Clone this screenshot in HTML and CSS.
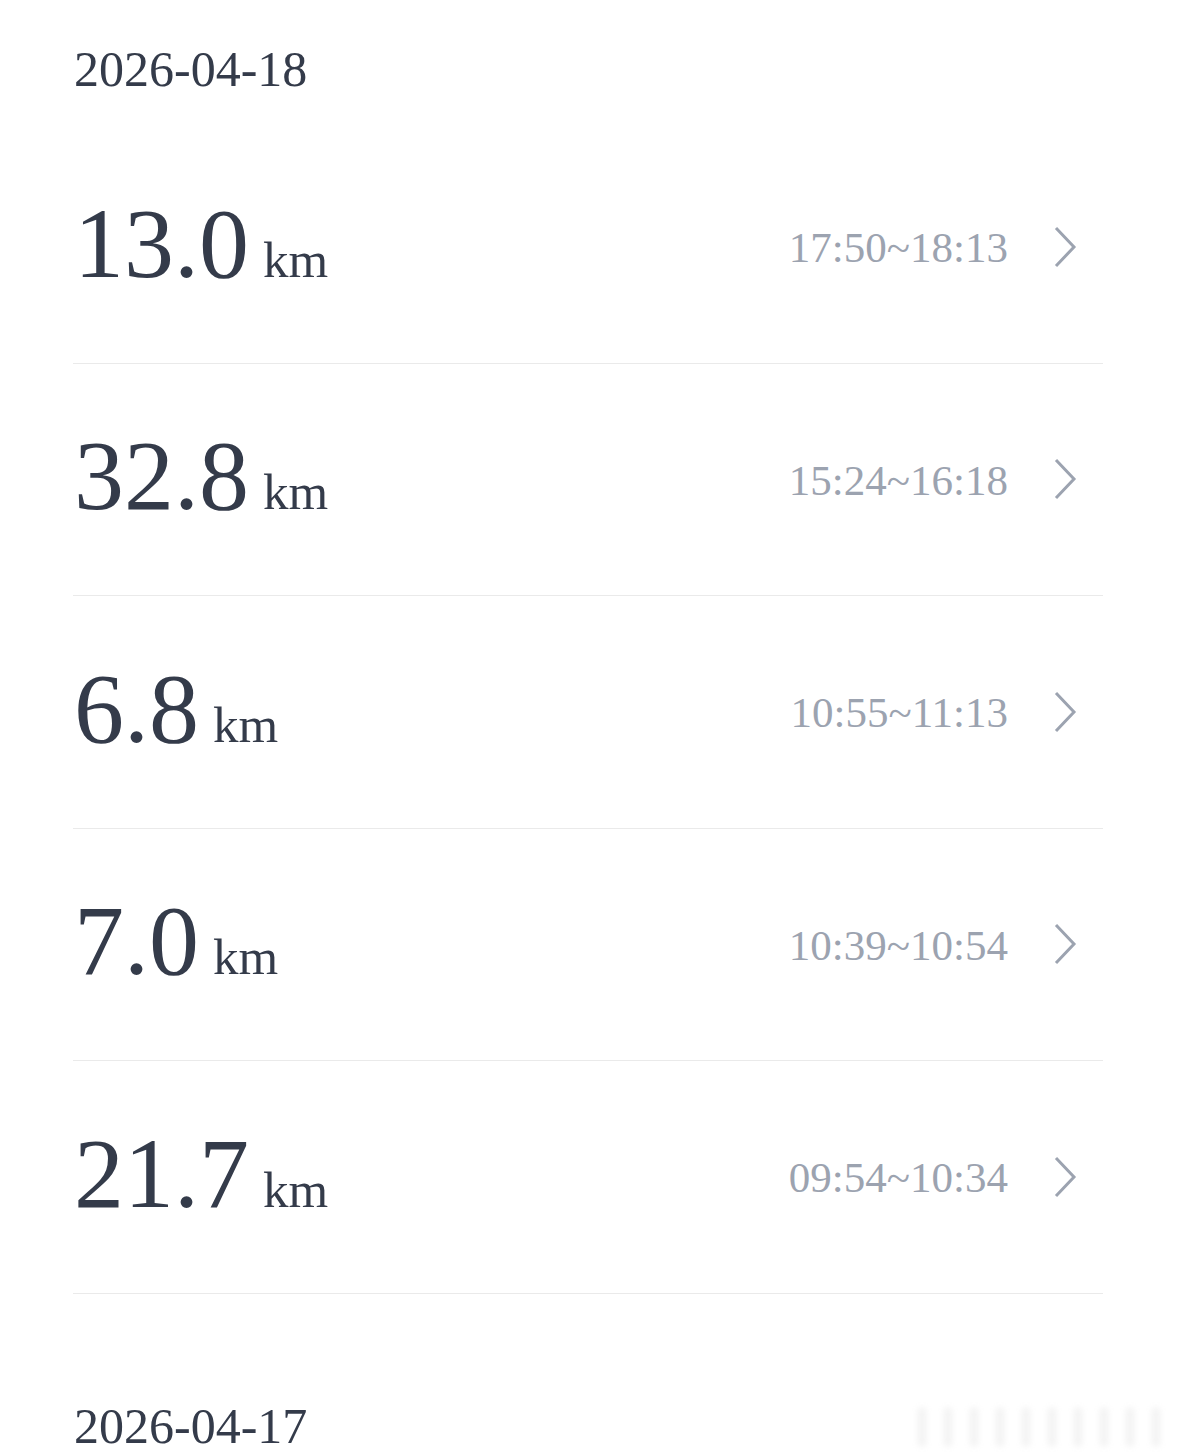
FILE: index.html
```html
<!DOCTYPE html>
<html>
  <head>
    <meta charset="UTF-8">
    <title>Rides</title>
    <link rel="stylesheet" href="styles.css">
  </head>
  <body>
    <div class="list">
      <div class="day">
        <div class="day-date">2026-04-18</div>

        <div class="ride">
          <div class="ride-dist"><span class="ride-num">13.0</span><span class="ride-unit">km</span></div>
          <div class="ride-time">17:50~18:13</div>
          <svg class="ride-arrow" width="24" height="42" viewBox="0 0 24 42"><polyline points="3,2 21,21 3,40" /></svg>
        </div>

        <div class="ride">
          <div class="ride-dist"><span class="ride-num">32.8</span><span class="ride-unit">km</span></div>
          <div class="ride-time">15:24~16:18</div>
          <svg class="ride-arrow" width="24" height="42" viewBox="0 0 24 42"><polyline points="3,2 21,21 3,40" /></svg>
        </div>

        <div class="ride">
          <div class="ride-dist"><span class="ride-num">6.8</span><span class="ride-unit">km</span></div>
          <div class="ride-time">10:55~11:13</div>
          <svg class="ride-arrow" width="24" height="42" viewBox="0 0 24 42"><polyline points="3,2 21,21 3,40" /></svg>
        </div>

        <div class="ride">
          <div class="ride-dist"><span class="ride-num">7.0</span><span class="ride-unit">km</span></div>
          <div class="ride-time">10:39~10:54</div>
          <svg class="ride-arrow" width="24" height="42" viewBox="0 0 24 42"><polyline points="3,2 21,21 3,40" /></svg>
        </div>

        <div class="ride">
          <div class="ride-dist"><span class="ride-num">21.7</span><span class="ride-unit">km</span></div>
          <div class="ride-time">09:54~10:34</div>
          <svg class="ride-arrow" width="24" height="42" viewBox="0 0 24 42"><polyline points="3,2 21,21 3,40" /></svg>
        </div>
      </div>

      <div class="day day-next">
        <div class="day-date">2026-04-17</div>
      </div>
    </div>
    <div class="watermark"></div>
  </body>
</html>
```

FILE: styles.css
```css
body {
  margin: 0;
  background-color: #FFFFFF;
  font-family: "Liberation Serif", "Times New Roman", serif;
  color: #343B4A;
  overflow: hidden;
}

.list {
  padding: 0 76px 0 73px;
}

.day-date {
  font-size: 50px;
  line-height: 60px;
  padding: 39px 0 32px 1px;
  color: #343B4A;
}

.day-next {
  margin-top: 63px;
}

.ride {
  display: flex;
  align-items: center;
  height: 232.5px;
  box-sizing: border-box;
  border-bottom: 1px solid #EAEAEA;
}

.ride-dist {
  flex: 1;
  display: flex;
  align-items: baseline;
  padding: 0 0 6px 1px;
}

.ride-num {
  font-size: 100px;
  line-height: 1;
}

.ride-unit {
  font-size: 51px;
  line-height: 1;
  margin-left: 14px;
}

.ride-time {
  font-size: 43px;
  line-height: 1;
  padding-top: 2px;
  color: #9CA3B0;
}

.ride-arrow {
  margin: 0 26px 0 45px;
}

.ride-arrow polyline {
  fill: none;
  stroke: #9CA3B0;
  stroke-width: 3;
}

.watermark {
  position: absolute;
  left: 918px;
  top: 1408px;
  width: 252px;
  height: 38px;
  opacity: 0.18;
  filter: blur(3px);
  background: repeating-linear-gradient(90deg, #B8B8B8 0, #B8B8B8 8px, transparent 8px, transparent 26px);
}
```
